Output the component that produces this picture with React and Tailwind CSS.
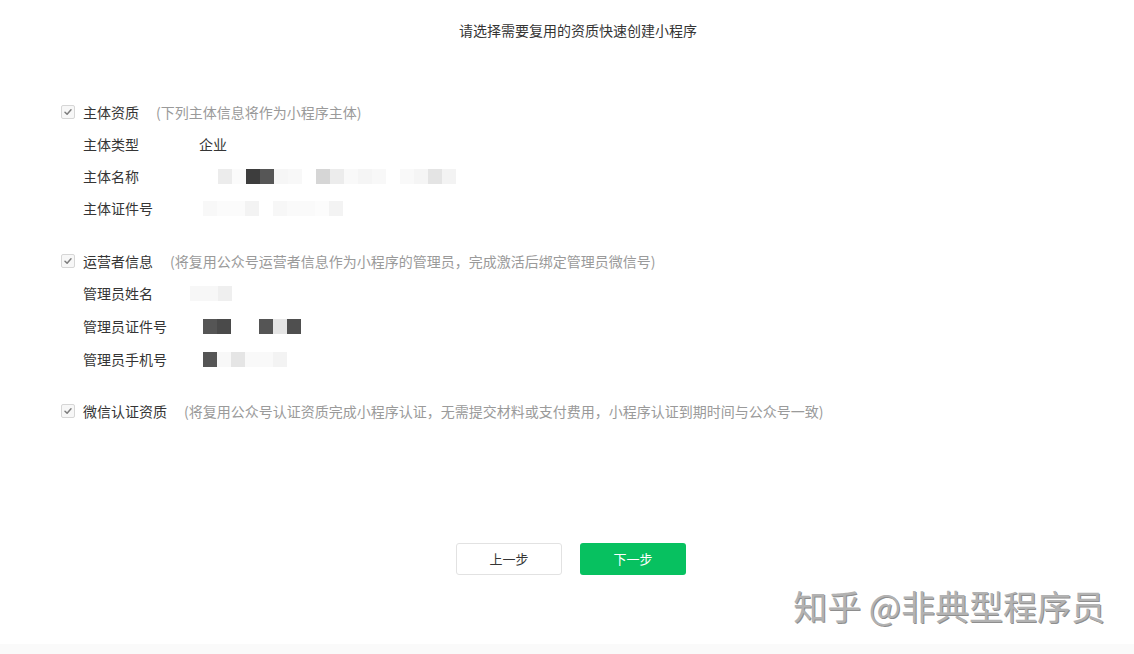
import React from "react";

const font = { fontFamily: '"Noto Sans CJK SC", "Noto Sans", sans-serif' };

function Check() {
  return (
    <span className="flex h-[14px] w-[14px] items-center justify-center rounded-[2px] border border-[#d6d6d6] bg-[#f7f7f7]">
      <svg width="10" height="10" viewBox="0 0 10 10">
        <path d="M2 5.2 L4.1 7.2 L8 2.8" fill="none" stroke="#7d7d7d" strokeWidth="1.5" strokeLinecap="round" strokeLinejoin="round" />
      </svg>
    </span>
  );
}

function Header({ label, desc }) {
  return (
    <div className="flex h-[32px] items-center pl-[61px]">
      <Check />
      <span className="ml-[8px] text-[14px] text-[#353535]">{label}</span>
      <span className="ml-[17px] text-[14px] text-[#9a9a9a]">{desc}</span>
    </div>
  );
}

function Cells({ cells, start = 0 }) {
  return (
    <div className="flex" style={{ marginLeft: start }}>
      {cells.map((c, i) => (
        <span key={i} className="h-[15px] w-[14px]" style={{ backgroundColor: c }} />
      ))}
    </div>
  );
}

function Row({ label, h = "h-[32px]", children }) {
  return (
    <div className={`flex ${h} items-center pl-[83px]`}>
      <span className="w-[116px] shrink-0 text-[14px] text-[#353535]">{label}</span>
      {children}
    </div>
  );
}

const W = "#ffffff";

export default function App() {
  return (
    <div className="flex h-[654px] w-full flex-col bg-white" style={font}>
      <div className="relative flex flex-1 flex-col">
        <div className="pl-[22px] pt-[20px] text-center text-[14px] leading-[20px] text-[#353535]">
          请选择需要复用的资质快速创建小程序
        </div>

        <div className="mt-[56px]">
          <Header label="主体资质" desc="(下列主体信息将作为小程序主体)" />
          <Row label="主体类型">
            <span className="text-[14px] text-[#353535]">企业</span>
          </Row>
          <Row label="主体名称">
            <Cells
              start={19}
              cells={["#ececec", "#fbfbfb", "#3d3d3d", "#565656", "#f6f6f6", "#f8f8f8", W, "#d6d6d6", "#ececec", "#f9f9f9", "#f5f5f5", "#f8f8f8", W, "#f9f9f9", "#f5f5f5", "#e4e4e4", "#f3f3f3"]}
            />
          </Row>
          <Row label="主体证件号" h="h-[33px]">
            <Cells
              start={4}
              cells={["#f8f8f8", "#fbfbfb", "#fbfbfb", "#f3f3f3", W, "#f7f7f7", "#fafafa", "#fafafa", "#fcfcfc", "#f3f3f3"]}
            />
          </Row>
        </div>

        <div className="mt-[20px]">
          <Header label="运营者信息" desc="(将复用公众号运营者信息作为小程序的管理员，完成激活后绑定管理员微信号)" />
          <Row label="管理员姓名" h="h-[33px]">
            <Cells start={-9} cells={["#f7f7f7", "#f7f7f7", "#efefef"]} />
          </Row>
          <Row label="管理员证件号" h="h-[33px]">
            <Cells start={4} cells={["#555555", "#4a4a4a", W, W, "#555555", "#e5e5e5", "#4f4f4f"]} />
          </Row>
          <Row label="管理员手机号" h="h-[33px]">
            <Cells start={4} cells={["#555555", "#f8f8f8", "#e5e5e5", "#f9f9f9", "#f9f9f9", "#f3f3f3"]} />
          </Row>
        </div>

        <div className="mt-[19px]">
          <Header
            label="微信认证资质"
            desc="(将复用公众号认证资质完成小程序认证，无需提交材料或支付费用，小程序认证到期时间与公众号一致)"
          />
        </div>

        <div className="mt-[116px] flex justify-center gap-[18px] pl-[8px]">
          <button className="h-[32px] w-[106px] rounded-[3px] border border-[#e2e2e2] bg-white text-[13px] text-[#353535]">
            上一步
          </button>
          <button className="h-[32px] w-[106px] rounded-[3px] bg-[#07c160] text-[13px] text-white">
            下一步
          </button>
        </div>

        <div
          className="absolute right-[29px] top-[582px] text-[34px] font-normal leading-[48px] text-[#b2b2b2]"
          style={{ textShadow: "1px 1px 0 #8e8e8e" }}
        >
          知乎 @非典型程序员
        </div>
      </div>
      <div className="h-[10px] bg-[#fafafa]" />
    </div>
  );
}
